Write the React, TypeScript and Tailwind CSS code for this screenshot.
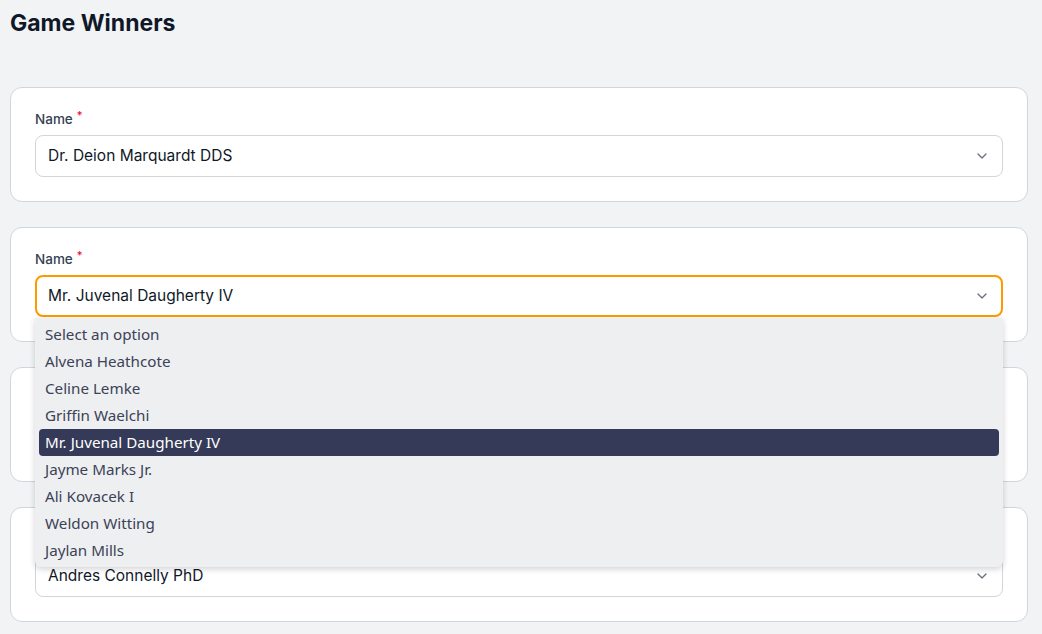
import { ChevronDown } from "lucide-react";

const options = [
  "Select an option",
  "Alvena Heathcote",
  "Celine Lemke",
  "Griffin Waelchi",
  "Mr. Juvenal Daugherty IV",
  "Jayme Marks Jr.",
  "Ali Kovacek I",
  "Weldon Witting",
  "Jaylan Mills",
];

function NameField({ value, open }: { value: string; open?: boolean }) {
  return (
    <div className="rounded-xl border border-gray-300 bg-white px-6 pt-[23px] pb-6">
      <label className="flex items-start gap-1 text-[13.5px] leading-4 font-medium text-gray-700">
        Name
        <span className="-mt-1 text-[11px] text-rose-600">*</span>
      </label>
      <div className="relative mt-2">
        <div
          className={`flex h-[42px] items-center justify-between rounded-lg bg-white pl-3 pr-3 text-[15.5px] text-gray-900 ${
            open ? "border-2 border-amber-500 pl-[11px] pr-[11px]" : "border border-gray-300"
          }`}
        >
          <span>{value}</span>
          <ChevronDown className="h-4 w-4 text-gray-500" strokeWidth={2} />
        </div>
        {open && (
          <ul className="absolute left-0 right-0 top-[43px] z-10 rounded-b-md bg-[#eeeff1] px-1 py-[3px] font-['Noto_Sans',sans-serif] text-[15.2px] text-[#3c4257] shadow-[0_2px_6px_rgba(0,0,0,0.18)]">
            {options.map((o) => (
              <li
                key={o}
                className={`flex h-[27px] items-center rounded px-[6px] ${
                  o === value ? "bg-[#343a57] text-white" : ""
                }`}
              >
                {o}
              </li>
            ))}
          </ul>
        )}
      </div>
    </div>
  );
}

export default function App() {
  return (
    <div className="min-h-screen bg-[#f2f3f5] pl-[10px] pr-[14px] pb-8 font-['Inter',sans-serif]">
      <h1 className="pt-[8px] text-[23px] leading-[30px] font-bold text-gray-900">
        Game Winners
      </h1>
      <div className="mt-[49px] flex flex-col gap-[25px]">
        <NameField value="Dr. Deion Marquardt DDS" />
        <NameField value="Mr. Juvenal Daugherty IV" open />
        <NameField value="Alvena Heathcote" />
        <NameField value="Andres Connelly PhD" />
      </div>
    </div>
  );
}
